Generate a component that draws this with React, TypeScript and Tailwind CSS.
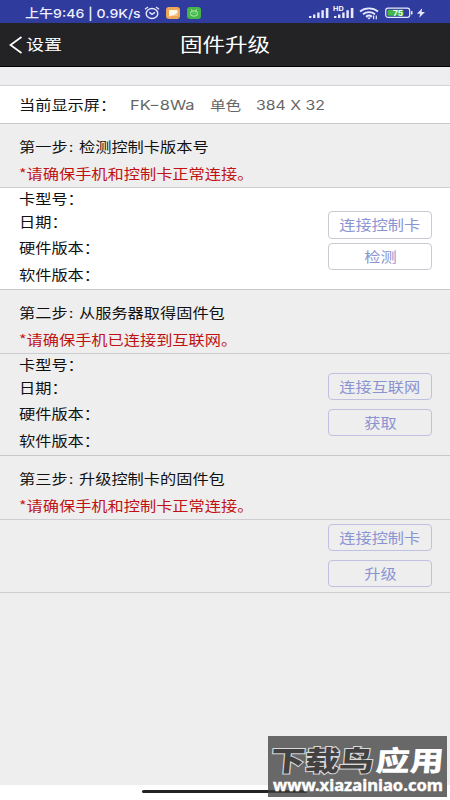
import type { ReactNode } from "react";

const FIRMWARE_ROWS = [
  { label: "卡型号：", className: "h-[22px]" },
  { label: "日期：", className: "h-[24px]" },
  { label: "硬件版本：", className: "h-[27px]" },
  { label: "软件版本：", className: "h-[28px]" },
];

// Wide lettering of the device font
function Wide({ children, className = "" }: { children: ReactNode; className?: string }) {
  return (
    <span className={`inline-block origin-left scale-x-[1.2] whitespace-pre ${className}`}>
      {children}
    </span>
  );
}

function Signal() {
  return (
    <svg width="20" height="12" viewBox="0 0 20 12" fill="#e6e9ff">
      <rect x="0" y="9" width="2.4" height="2" />
      <rect x="4" y="7.5" width="2.4" height="3.5" />
      <rect x="8.2" y="5.5" width="2.4" height="5.5" />
      <rect x="12.4" y="3.2" width="2.4" height="7.8" />
      <rect x="16.8" y="1" width="2.6" height="10" />
    </svg>
  );
}

function StatusBar() {
  return (
    <div className="flex h-[23px] items-center bg-[#303b9e] text-white">
      <div className="ml-[25px] w-[119px] pt-[4px] text-[12px] leading-5 font-medium text-[#eef0ff]">
        <Wide className="scale-x-[1.17]">上午9:46 | 0.9K/s</Wide>
      </div>
      <svg className="mt-[3px]" width="16" height="14" viewBox="0 0 16 14" fill="none" stroke="#e6e9ff" strokeWidth="1.4">
        <ellipse cx="8" cy="7.5" rx="5.8" ry="5" />
        <path d="M1 3.2 4 1M15 3.2 12 1M5.3 6.2 8 8.4l3-2" />
      </svg>
      <svg className="mt-[3px] ml-[6px]" width="14" height="12" viewBox="0 0 14 12">
        <rect width="14" height="12" rx="3" fill="#f0a657" />
        <path d="M3 3h8.5v5.5H6L3 9.8z" fill="#fff8ea" />
        <path d="m7.5 8.5 4-3v3z" fill="#f3bd80" />
      </svg>
      <svg className="mt-[3px] ml-[7px]" width="14" height="12" viewBox="0 0 14 12">
        <rect width="14" height="12" rx="3" fill="#43b549" />
        <rect x="3.5" y="4" width="7" height="5" rx="2.4" fill="none" stroke="#b5efb3" />
        <path d="m4.3 2.3 1 1.5M9.7 2.3l-1 1.5M5.6 6.2h.9M7.7 6.2h.9" stroke="#b5efb3" />
      </svg>
      <div className="mt-[3px] ml-auto flex items-center pr-[25px]">
        <Signal />
        <div className="relative ml-[5px] flex">
          <Signal />
          <span className="absolute -top-[1px] -left-[1px] origin-left scale-x-[1.2] bg-[#303b9e] text-[6px] leading-[6px] font-bold">HD</span>
        </div>
        <svg className="ml-[5px]" width="20" height="13" viewBox="0 0 20 13" fill="none" stroke="#e6e9ff" strokeWidth="1.8">
          <path d="M1 4.5c5-4.3 13-4.3 18 0M4 7.2c3.4-2.9 8.6-2.9 12 0M7 9.8c1.8-1.5 4.2-1.5 6 0" />
          <path d="m8 10.5 2 2 2-2z" fill="#e6e9ff" stroke="none" />
          <path d="M14.6 8.5v3.8M17.3 8.5v3.8" strokeWidth="1.2" />
        </svg>
        <svg className="ml-[6px]" width="28" height="12" viewBox="0 0 28 12">
          <rect x=".7" y="1.2" width="24" height="9.2" rx="2.4" fill="none" stroke="#e6e9ff" strokeWidth="1.2" />
          <rect x="2.5" y="2.8" width="16" height="6" rx="1" fill="#43b549" />
          <rect x="26" y="4" width="1.5" height="3.6" rx=".6" fill="#e6e9ff" />
          <text x="8" y="8.8" fill="#fff" fontSize="8" fontWeight="600" textLength="10" lengthAdjust="spacingAndGlyphs">75</text>
        </svg>
        <svg className="ml-[4px]" width="8" height="10" viewBox="0 0 8 10" fill="#e6e9ff">
          <path d="M5.2.3 0 5.7h3.2L2.2 9.8 8 4H4.6z" />
        </svg>
      </div>
    </div>
  );
}

function NavBar() {
  return (
    <div className="grid h-[44px] grid-cols-[180px_1fr] items-center border-b border-black bg-[#232326] text-white">
      <div className="flex items-center pl-[9px]">
        <svg width="14" height="18" viewBox="0 0 14 18" fill="none" stroke="#fff" strokeWidth="1.7">
          <path d="M12.5 1 1.5 9l11 8" />
        </svg>
        <Wide className="ml-[3px] pt-px text-[15px]">设置</Wide>
      </div>
      <Wide className="w-fit pt-[2px] text-[18.8px]">固件升级</Wide>
    </div>
  );
}

function StepHeader({ step, title, warning }: { step: string; title: string; warning: string }) {
  return (
    <div className="h-[64px] border-b border-[#cdcdd1] pt-[10px] pl-[18.5px]">
      <div className="h-[26px] leading-[27px] text-[#111]">
        <Wide>
          {step}
          <span className="inline-block w-[9.5px] pl-[1px]">:</span>
          {title}
        </Wide>
      </div>
      <div className="h-[27px] leading-[27px] text-[#c01212]">
        <Wide className="font-['Noto_Sans_CJK_SC',sans-serif]">*{warning}</Wide>
      </div>
    </div>
  );
}

function FirmwareInfo() {
  return (
    <div className="flex-1 pl-[18.5px] text-[#111]">
      {FIRMWARE_ROWS.map((row) => (
        <div key={row.label} className={`flex items-center ${row.className}`}>
          <Wide>{row.label}</Wide>
        </div>
      ))}
    </div>
  );
}

function ActionButton({ children, className }: { children: ReactNode; className: string }) {
  return (
    <button className={`flex w-[104px] items-center justify-center rounded-[4px] border text-[#8b94d2] ${className}`}>
      <span className="inline-block scale-x-[1.2]">{children}</span>
    </button>
  );
}

export default function App() {
  return (
    <div className="relative flex h-[800px] w-[450px] flex-col overflow-hidden bg-[#eeeeee] font-['Inter','Noto_Sans_CJK_SC',sans-serif] text-[13.5px] leading-[20px]">
      <StatusBar />
      <NavBar />

      <div className="h-[19px] border-b border-[#d3d3d6] bg-[#eeeef0]" />

      <div className="flex h-[38px] items-center border-b border-[#c8c8ca] bg-white pl-[18.5px]">
        <Wide className="w-[111.5px] text-[#111]">当前显示屏：</Wide>
        <Wide className="w-[80px] text-[13.7px] text-[#666]">FK−8Wa</Wide>
        <Wide className="w-[46px] text-[13px] text-[#666]">单色</Wide>
        <Wide className="text-[13.2px] text-[#666]">384 X 32</Wide>
      </div>

      <StepHeader step="第一步" title="检测控制卡版本号" warning="请确保手机和控制卡正常连接。" />
      <div className="flex h-[102px] border-b border-[#c8c8ca] bg-white">
        <FirmwareInfo />
        <div className="flex flex-col gap-[4px] pt-[23px] pr-[18px]">
          <ActionButton className="h-[28px] border-[#cacad2]">连接控制卡</ActionButton>
          <ActionButton className="h-[27px] border-[#cacad2]">检测</ActionButton>
        </div>
      </div>

      <StepHeader step="第二步" title="从服务器取得固件包" warning="请确保手机已连接到互联网。" />
      <div className="flex h-[102px] border-b border-[#c8c8ca]">
        <FirmwareInfo />
        <div className="flex flex-col gap-[9px] pt-[19px] pr-[18px]">
          <ActionButton className="h-[27px] border-[#c0c0e0]">连接互联网</ActionButton>
          <ActionButton className="h-[27px] border-[#c0c0e0]">获取</ActionButton>
        </div>
      </div>

      <StepHeader step="第三步" title="升级控制卡的固件包" warning="请确保手机和控制卡正常连接。" />
      <div className="flex h-[73px] flex-col items-end gap-[9px] border-b border-[#cdcdd1] pt-[4px] pr-[18px]">
        <ActionButton className="h-[27px] border-[#c0c0e0]">连接控制卡</ActionButton>
        <ActionButton className="h-[27px] border-[#c0c0e0]">升级</ActionButton>
      </div>

      <div className="mt-auto h-[15px] bg-white pt-[5px]">
        <div className="mx-auto h-[3px] w-[166px] rounded-full bg-[#242424]" />
      </div>

      {/* watermark over the page corner */}
      <div className="absolute top-[736px] left-[268px] h-[61px] w-[179px] bg-[#686868]">
        <svg width="179" height="61" viewBox="0 0 179 61">
          <path d="M0 55.5h39" stroke="#303030" strokeWidth="2.4" />
          <g className="font-['Noto_Sans_CJK_SC',sans-serif] font-black" fontSize="28" transform="translate(3 0) skewX(-5)">
            <text x="2" y="35" textLength="103" lengthAdjust="spacingAndGlyphs" fill="#424242" stroke="#d8d8d8" strokeWidth="2" paintOrder="stroke">下载鸟</text>
            <text x="107" y="35" textLength="68" lengthAdjust="spacingAndGlyphs" fill="#fff">应用</text>
          </g>
          <text className="font-['Noto_Sans',sans-serif] font-bold" x="5" y="55" fontSize="16" textLength="170" lengthAdjust="spacingAndGlyphs" fill="#fff" stroke="#fff" strokeWidth=".4">www.xiazainiao.com</text>
        </svg>
      </div>
    </div>
  );
}
